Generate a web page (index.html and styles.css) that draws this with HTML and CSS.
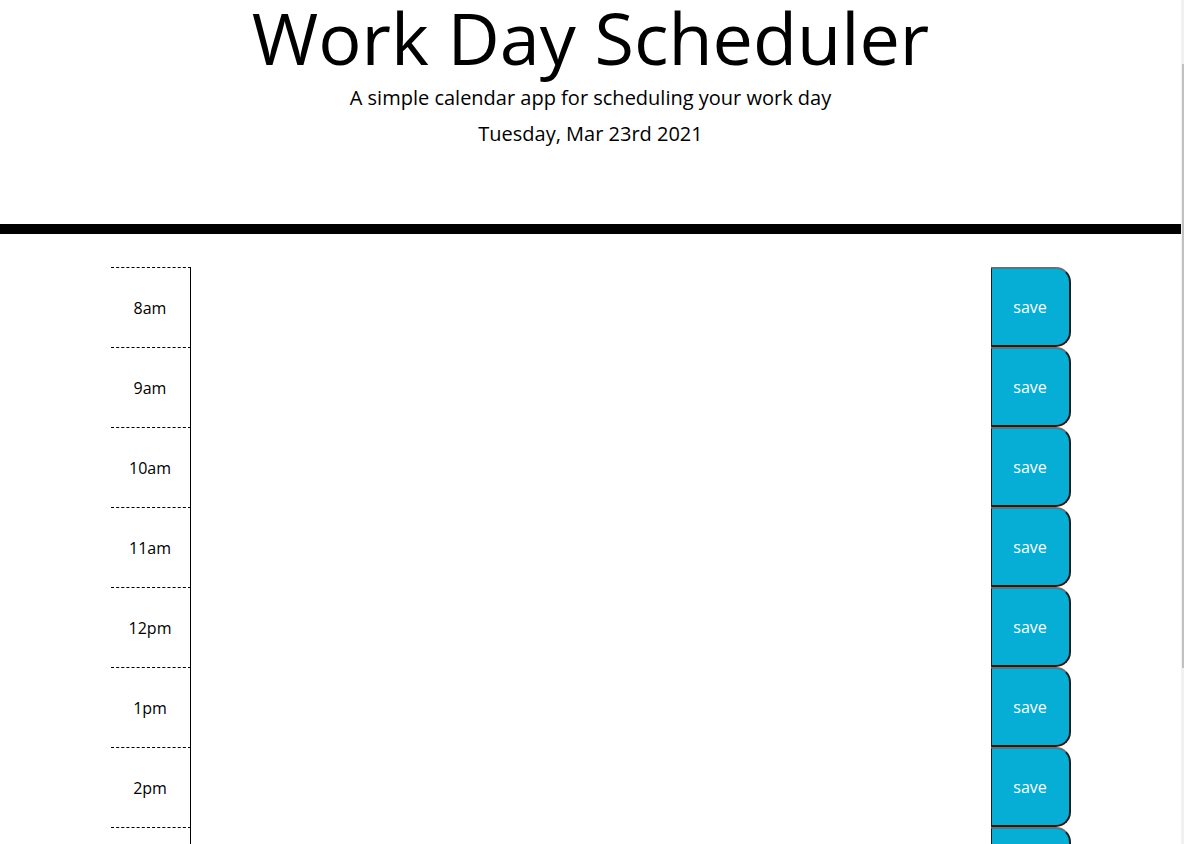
FILE: index.html
```html
<!DOCTYPE html>
<html lang="en">
<head>
<meta charset="utf-8">
<title>Work Day Scheduler</title>
<link rel="stylesheet" href="styles.css">
</head>
<body>
<div class="page">
  <main class="main">
    <header class="jumbotron">
      <h1 class="title">Work Day Scheduler</h1>
      <p class="lead">A simple calendar app for scheduling your work day</p>
      <p class="lead date">Tuesday, Mar 23rd 2021</p>
    </header>
    <div class="container">
      <div class="row"><div class="hour">8am</div><textarea class="description"></textarea><button class="saveBtn">save</button></div>
      <div class="row"><div class="hour">9am</div><textarea class="description"></textarea><button class="saveBtn">save</button></div>
      <div class="row"><div class="hour">10am</div><textarea class="description"></textarea><button class="saveBtn">save</button></div>
      <div class="row"><div class="hour">11am</div><textarea class="description"></textarea><button class="saveBtn">save</button></div>
      <div class="row"><div class="hour">12pm</div><textarea class="description"></textarea><button class="saveBtn">save</button></div>
      <div class="row"><div class="hour">1pm</div><textarea class="description"></textarea><button class="saveBtn">save</button></div>
      <div class="row"><div class="hour">2pm</div><textarea class="description"></textarea><button class="saveBtn">save</button></div>
      <div class="row"><div class="hour">3pm</div><textarea class="description"></textarea><button class="saveBtn">save</button></div>
    </div>
  </main>
  <div class="scrollbar"><div class="thumb"></div></div>
</div>
</body>
</html>
```

FILE: styles.css
```css
html, body {
  margin: 0;
  padding: 0;
  height: 844px;
  overflow: hidden;
  background: #fff;
}

body {
  font-family: "Open Sans", "Liberation Sans", sans-serif;
  color: #000;
}

.page {
  display: flex;
  height: 844px;
}

.main {
  flex: 1;
  min-width: 0;
  overflow: hidden;
}

.scrollbar {
  width: 3px;
  background: #f1f1f1;
  display: flex;
  flex-direction: column;
  align-items: flex-end;
}

.thumb {
  margin-top: 64px;
  width: 2px;
  height: 604px;
  background: #c1c1c1;
}

.jumbotron {
  text-align: center;
  border-bottom: 10px solid #000;
  padding-bottom: 75px;
  margin-bottom: 33px;
}

.title {
  font-size: 72px;
  font-weight: 400;
  line-height: 86px;
  margin: -6px 0 0;
}

.lead {
  font-size: 20px;
  font-weight: 400;
  line-height: 30px;
  margin: 0;
}

.title + .lead {
  margin-top: 3px;
}

.date {
  margin-top: 6px;
}

.container {
  width: 960px;
  margin: 0 auto;
}

.row {
  display: flex;
  height: 80px;
}

.hour {
  width: 80px;
  box-sizing: border-box;
  border-top: 1px dashed #000;
  border-right: 1px solid #000;
  display: flex;
  align-items: center;
  justify-content: center;
  font-size: 16px;
  padding-top: 1px;
}

.description {
  flex: 1;
  border: none;
  margin: 0;
  padding: 0;
  resize: none;
  background: #fff;
  outline: none;
}

.saveBtn {
  width: 80px;
  height: 80px;
  box-sizing: border-box;
  margin: 0;
  background: #06aed5;
  color: #fff;
  font-family: "Open Sans", "Liberation Sans", sans-serif;
  font-size: 16px;
  border-style: solid;
  border-width: 2px 2px 2px 1px;
  border-color: #6e6e6e #1e1e1e #1e1e1e #1e1e1e;
  border-radius: 0 15px 15px 0;
  padding: 0;
}
```
